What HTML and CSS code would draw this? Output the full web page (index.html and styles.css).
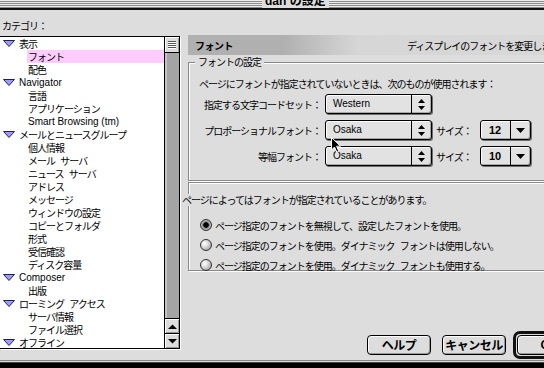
FILE: index.html
```html
<!DOCTYPE html>
<html lang="ja">
<head>
<meta charset="utf-8">
<title>dan の設定</title>
<link rel="stylesheet" href="styles.css">
</head>
<body>
<div class="window">
  <div class="titlebar"><span class="title">dan の設定</span></div>
  <div class="main">
    <div class="left">
      <div class="cat-label">カテゴリ：</div>
      <div class="list">
        <ul class="items">
          <li class="top"><svg class="tri" width="12" height="7" viewBox="0 0 12 7"><path d="M0.5 0.5 H11.5 L6 6.5 Z" fill="#9c9cff" stroke="#202050"/></svg>表示</li>
          <li class="sub sel">フォント</li>
          <li class="sub">配色</li>
          <li class="top en"><svg class="tri" width="12" height="7" viewBox="0 0 12 7"><path d="M0.5 0.5 H11.5 L6 6.5 Z" fill="#9c9cff" stroke="#202050"/></svg>Navigator</li>
          <li class="sub">言語</li>
          <li class="sub">アプリケーション</li>
          <li class="sub en">Smart Browsing (tm)</li>
          <li class="top"><svg class="tri" width="12" height="7" viewBox="0 0 12 7"><path d="M0.5 0.5 H11.5 L6 6.5 Z" fill="#9c9cff" stroke="#202050"/></svg>メールとニュースグループ</li>
          <li class="sub">個人情報</li>
          <li class="sub">メール サーバ</li>
          <li class="sub">ニュース サーバ</li>
          <li class="sub">アドレス</li>
          <li class="sub">メッセージ</li>
          <li class="sub">ウィンドウの設定</li>
          <li class="sub">コピーとフォルダ</li>
          <li class="sub">形式</li>
          <li class="sub">受信確認</li>
          <li class="sub">ディスク容量</li>
          <li class="top en"><svg class="tri" width="12" height="7" viewBox="0 0 12 7"><path d="M0.5 0.5 H11.5 L6 6.5 Z" fill="#9c9cff" stroke="#202050"/></svg>Composer</li>
          <li class="sub">出版</li>
          <li class="top"><svg class="tri" width="12" height="7" viewBox="0 0 12 7"><path d="M0.5 0.5 H11.5 L6 6.5 Z" fill="#9c9cff" stroke="#202050"/></svg>ローミング アクセス</li>
          <li class="sub">サーバ情報</li>
          <li class="sub">ファイル選択</li>
          <li class="top"><svg class="tri" width="12" height="7" viewBox="0 0 12 7"><path d="M0.5 0.5 H11.5 L6 6.5 Z" fill="#9c9cff" stroke="#202050"/></svg>オフライン</li>
        </ul>
        <div class="scrollbar">
          <div class="thumb"><i></i><i></i><i></i><i></i></div>
          <div class="track"></div>
          <div class="arrow"><svg width="9" height="5" viewBox="0 0 9 5"><path d="M0 5 H9 L4.5 0.5 Z" fill="#000"/></svg></div>
          <div class="arrow"><svg width="9" height="5" viewBox="0 0 9 5"><path d="M0 0 H9 L4.5 4.5 Z" fill="#000"/></svg></div>
        </div>
      </div>
    </div>
    <div class="right">
      <div class="header">
        <span class="hdr-title">フォント</span>
        <span class="hdr-desc">ディスプレイのフォントを変更します</span>
      </div>
      <div class="group g1">
        <span class="legend">フォントの設定</span>
        <p class="desc">ページにフォントが指定されていないときは、次のものが使用されます：</p>
        <div class="fontrows">
          <span class="lbl">指定する文字コードセット：</span>
          <div class="popup"><span class="val">Western</span><span class="arr"><svg width="7" height="11" viewBox="0 0 7 11"><path d="M3.5 0 L7 4 H0 Z M0 7 H7 L3.5 11 Z" fill="#000"/></svg></span></div>
          <span></span><span></span>
          <span class="lbl">プロポーショナルフォント：</span>
          <div class="popup"><span class="val">Osaka</span><span class="arr"><svg width="7" height="11" viewBox="0 0 7 11"><path d="M3.5 0 L7 4 H0 Z M0 7 H7 L3.5 11 Z" fill="#000"/></svg></span></div>
          <span class="size-lbl">サイズ：</span>
          <div class="popup size"><span class="val">12</span><span class="arr"><svg width="9" height="5" viewBox="0 0 9 5"><path d="M0 0 H9 L4.5 5 Z" fill="#000"/></svg></span></div>
          <span class="lbl">等幅フォント：</span>
          <div class="popup"><span class="val">Osaka</span><span class="arr"><svg width="7" height="11" viewBox="0 0 7 11"><path d="M3.5 0 L7 4 H0 Z M0 7 H7 L3.5 11 Z" fill="#000"/></svg></span></div>
          <span class="size-lbl">サイズ：</span>
          <div class="popup size"><span class="val">10</span><span class="arr"><svg width="9" height="5" viewBox="0 0 9 5"><path d="M0 0 H9 L4.5 5 Z" fill="#000"/></svg></span></div>
        </div>
      </div>
      <div class="group g2">
        <p class="note">ページによってはフォントが指定されていることがあります。</p>
        <div class="opts">
          <label class="opt"><span class="radio on"></span>ページ指定のフォントを無視して、設定したフォントを使用。</label>
          <label class="opt"><span class="radio"></span>ページ指定のフォントを使用。ダイナミック フォントは使用しない。</label>
          <label class="opt"><span class="radio"></span>ページ指定のフォントを使用。ダイナミック フォントも使用する。</label>
        </div>
      </div>
      <div class="buttons">
        <button class="btn help">ヘルプ</button>
        <button class="btn cancel">キャンセル</button>
        <span class="default"><button class="btn ok">OK</button></span>
      </div>
    </div>
  </div>
  <div class="bottom"></div>
</div>
<svg class="cursor" width="12" height="18" viewBox="0 0 12 18"><path d="M1.5 1.5 V14 L4.5 11 L6.8 16.2 L8.8 15.3 L6.6 10.2 H10.5 Z" fill="#000" stroke="#fff" stroke-width="1"/></svg>
</body>
</html>
```
FILE: styles.css
```css
* { box-sizing: border-box; margin: 0; padding: 0; }
html, body { width: 544px; height: 368px; overflow: hidden; }
body {
  background: #dddddd;
  font-family: "Noto Sans CJK JP", sans-serif;
  font-size: 10px;
  letter-spacing: -1px;
  word-spacing: 4px;
  color: #000;
  position: relative;
}
.window { display: flex; flex-direction: column; height: 368px; width: 544px; }

.titlebar {
  height: 10px;
  flex: none;
  border-bottom: 2px solid #111;
  background: repeating-linear-gradient(to bottom, #eeeeee 0 1px, #8a8a8a 1px 2px);
  display: flex;
  padding-left: 262px;
  overflow: hidden;
}
.title {
  background: #dddddd;
  padding: 0 3px;
  font-family: "Liberation Sans", "Noto Sans CJK JP", sans-serif;
  font-weight: bold;
  font-size: 12px;
  letter-spacing: 0;
  word-spacing: 0;
  line-height: 12px;
  margin-top: -5px;
  height: 13px;
  white-space: nowrap;
}

.main { display: flex; height: 350px; flex: none; }
.left { width: 180px; flex: none; }
.cat-label { height: 26px; padding: 9px 0 0 2px; line-height: 14px; }

.list {
  height: 313px;
  display: flex;
  border: 1px solid #000;
  border-left: 0;
  box-shadow: 1px 1px 0 #fff;
}
.items { flex: 1; background: #fff; list-style: none; overflow: hidden; }
.items li {
  height: 13px;
  line-height: 13px;
  white-space: nowrap;
  display: flex;
  align-items: center;
}
.items li.top { padding-left: 3px; }
.items li.sub { margin-left: 27px; padding-left: 1px; }
.items li.sel { background: #ffccff; }
.items li.en { font-family: "Liberation Sans", sans-serif; letter-spacing: 0; word-spacing: 0; }
.tri { margin-right: 4px; flex: none; }

.scrollbar {
  width: 15px;
  flex: none;
  border-left: 1px solid #000;
  display: flex;
  flex-direction: column;
}
.thumb {
  height: 16px;
  background: #dcdcdc;
  border-bottom: 1px solid #000;
  box-shadow: inset 1px 1px 0 #fff, inset -1px 0 0 #999;
  display: flex;
  flex-direction: column;
  align-items: center;
  justify-content: center;
  gap: 1px;
}
.thumb i { display: block; width: 8px; height: 1px; background: #555; box-shadow: 0 1px 0 #fff; }
.track { flex: 1; background: linear-gradient(to right, #c4c4c4 0 2px, #a4a4a4 2px); }
.arrow {
  height: 15px;
  background: #dcdcdc;
  border-top: 1px solid #000;
  box-shadow: inset 1px 1px 0 #fff, inset -1px -1px 0 #999;
  display: flex;
  align-items: center;
  justify-content: center;
}

.right {
  flex: 1;
  padding-left: 8px;
  display: flex;
  flex-direction: column;
  align-items: flex-start;
  overflow: hidden;
  min-width: 0;
}
.header {
  margin-top: 25px;
  height: 20px;
  width: 380px;
  flex: none;
  display: flex;
  align-items: center;
  background: linear-gradient(to right, #b0b0b0 0, #b0b0b0 95px, #d6d6d6 170px, #d8d8d8);
  white-space: nowrap;
}
.hdr-title { width: 219px; flex: none; padding-left: 7px; font-weight: bold; letter-spacing: -0.5px; }
.hdr-desc { white-space: nowrap; }

.group {
  width: 380px;
  flex: none;
  border: 1px solid #888;
  box-shadow: 1px 1px 0 #fff, inset 1px 1px 0 #fff;
  display: flex;
  flex-direction: column;
  align-items: flex-start;
}
.g1 { margin-top: 7px; height: 119px; }
.legend {
  margin: -7px 0 0 6px;
  padding: 0 3px;
  background: #dddddd;
  line-height: 12px;
}
.desc { margin: 10px 0 0 10px; line-height: 12px; white-space: nowrap; }

.fontrows {
  margin-top: 4px;
  display: grid;
  grid-template-columns: 132px 107px 40px 51px;
  grid-auto-rows: 20px;
  column-gap: 4px;
  row-gap: 6px;
  align-items: center;
}
.lbl { text-align: right; white-space: nowrap; }
.size-lbl { white-space: nowrap; }

.popup {
  height: 20px;
  border: 1px solid #000;
  border-radius: 3px;
  background: #e2e2e2;
  box-shadow: inset 1px 1px 0 #fff, inset -1px -1px 0 #a8a8a8, 1px 1px 0 #6e6e6e;
  display: flex;
  align-items: stretch;
}
.popup .val {
  flex: 1;
  padding-left: 7px;
  font-family: "Liberation Sans", sans-serif;
  letter-spacing: 0;
  word-spacing: 0;
  font-size: 10px;
  line-height: 18px;
}
.popup .arr {
  width: 20px;
  flex: none;
  border-left: 1px solid #000;
  display: flex;
  align-items: center;
  justify-content: center;
}
.popup.size .val { padding-left: 8px; font-weight: bold; font-size: 11px; }

.g2 { margin-top: 1px; height: 89px; }
.note {
  margin: 11px 0 0 -7px;
  padding-right: 2px;
  background: #dddddd;
  line-height: 12px;
  white-space: nowrap;
}
.opts { margin-top: 9px; display: flex; flex-direction: column; gap: 0; }
.opt {
  margin-left: 11px;
  height: 20px;
  display: flex;
  align-items: center;
  gap: 3px;
  white-space: nowrap;
}
.radio {
  width: 12px;
  height: 12px;
  flex: none;
  border-radius: 50%;
  border: 1px solid #333;
  background: radial-gradient(circle at 35% 35%, #ffffff 0, #e6e6e6 30%, #9a9a9a 90%);
}
.radio.on {
  background: radial-gradient(circle at 50% 50%, #000 0 2.4px, #7a7a7a 3px, #bcbcbc 4.5px, #666 6px);
}

.buttons {
  margin-top: 60px;
  margin-left: 179px;
  display: flex;
  align-items: center;
  height: 28px;
  flex: none;
}
.btn {
  height: 20px;
  border: 1px solid #000;
  border-radius: 4px;
  background: #dddddd;
  box-shadow: inset 1px 1px 0 #fff, inset -1px -1px 0 #999;
  font-family: "Noto Sans CJK JP", sans-serif;
  font-weight: bold;
  font-size: 12px;
  letter-spacing: -0.5px;
  line-height: 16px;
  color: #000;
  flex: none;
}
.help { width: 64px; margin-right: 11px; }
.cancel { width: 64px; margin-right: 7px; }
.default {
  flex: none;
  border: 3px solid #111;
  border-radius: 7px;
  padding: 1px;
  background: #dddddd;
  display: flex;
}
.ok { width: 64px; font-family: "Liberation Sans", sans-serif; }

.bottom {
  flex: none;
  height: 8px;
  background: linear-gradient(to bottom, #888 0 1px, #dddddd 1px 2px, #444 2px 3px, #000 3px);
}

.cursor { position: absolute; left: 330px; top: 136px; }
```
